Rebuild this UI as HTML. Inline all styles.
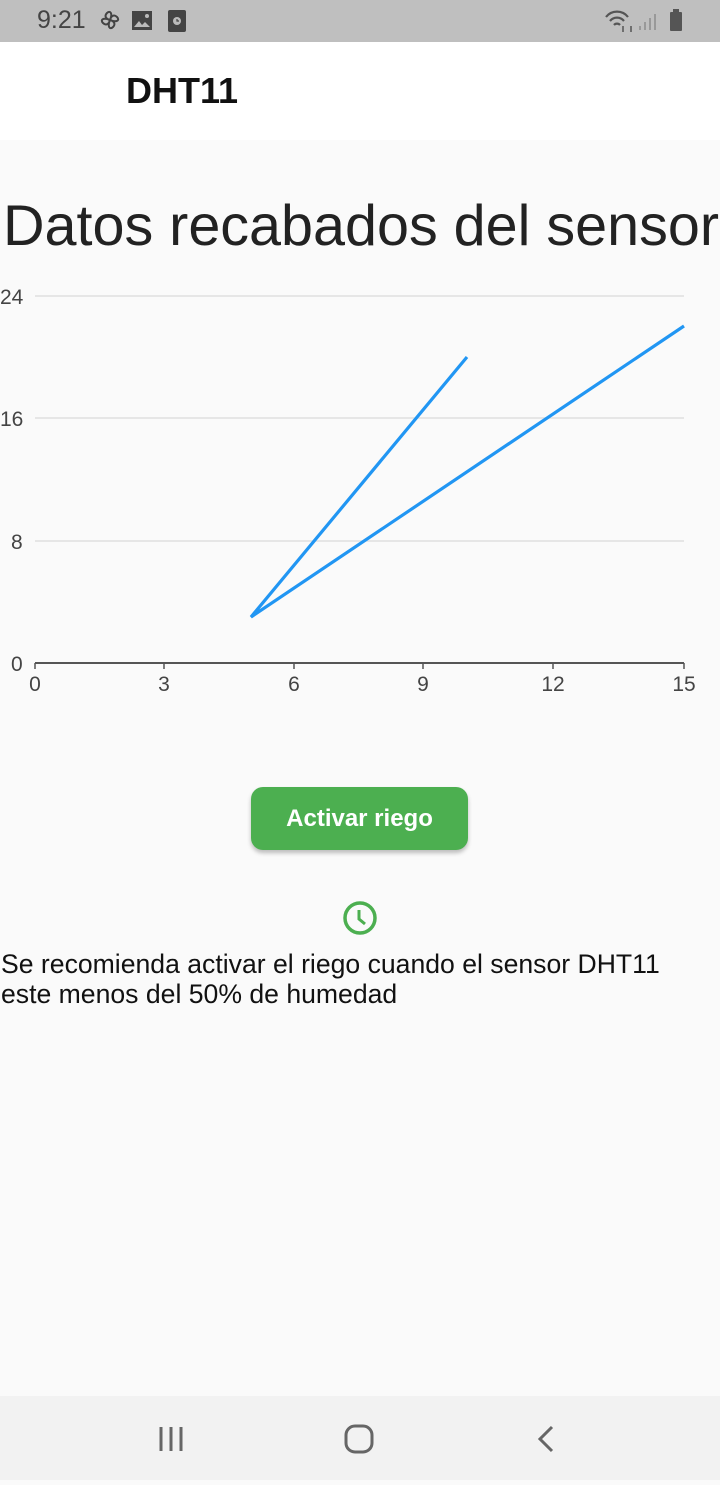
<!DOCTYPE html>
<html><head><meta charset="utf-8"><style>
body{margin:0;width:720px;height:1480px;background:#fafafa;font-family:"Liberation Sans",sans-serif;position:relative;overflow:hidden}
.sb{position:absolute;top:0;left:0;width:720px;height:42px;background:#bfbfbf}
.ab{position:absolute;top:42px;left:0;width:720px;height:98px;background:#fff}
.nav{position:absolute;top:1396px;left:0;width:720px;height:84px;background:#f2f2f2}
</style></head><body>
<div class="sb">
<span style="position:absolute;left:37px;top:6px;font-size:25px;color:#444">9:21</span>
<svg style="position:absolute;left:96px;top:8px" width="100" height="26" viewBox="0 0 100 26">
<g fill="none" stroke="#444" stroke-width="2"><path d="M14 12c-4-1-6-4-3-7s6 0 3 7zM14 12c1-4 4-6 7-3s0 6-7 3zM14 12c4 1 6 4 3 7s-6 0-3-7zM14 12c-1 4-4 6-7 3s0-6 7-3z"/></g>
<rect x="36" y="3" width="20" height="19" fill="#444"/><path d="M38 19l5-6 3 4 3-3 5 5z" fill="#bbb"/><circle cx="51" cy="8" r="2" fill="#bbb"/>
<rect x="72" y="2" width="18" height="22" rx="2" fill="#444"/><circle cx="81" cy="13" r="4" fill="#bbb"/><path d="M81 11v2h2" stroke="#444" stroke-width="1.2" fill="none"/>
</svg>
<svg style="position:absolute;left:604px;top:8px" width="86" height="26" viewBox="0 0 86 26">
<g fill="none" stroke="#555" stroke-width="2.2"><path d="M2 9a14 14 0 0 1 22 0M6 13a9 9 0 0 1 14 0M10 17a4 4 0 0 1 6 0"/></g>
<path d="M19 18v6M27 24v-6" stroke="#555" stroke-width="1.5"/>
<g stroke="#999" stroke-width="2"><path d="M36 22v-4M41 22v-8M46 22v-12M51 22v-16"/></g>
<rect x="66" y="4" width="12" height="19" rx="1" fill="#555"/><rect x="69" y="1" width="6" height="3" fill="#555"/>
</svg>
</div>
<div class="ab"><span style="position:absolute;left:126px;top:28px;font-size:36px;font-weight:bold;color:#111">DHT11</span></div>
<div style="position:absolute;left:3px;top:193px;font-size:57.5px;color:#222;white-space:nowrap">Datos recabados del sensor</div>
<svg style="position:absolute;left:0;top:280px" width="720" height="420" viewBox="0 280 720 420">
<g stroke="#e0e0e0" stroke-width="1.5"><path d="M35 296H684M35 418H684M35 541H684"/></g>
<path d="M35 663H684" stroke="#555" stroke-width="2"/>
<g stroke="#555" stroke-width="1.5"><path d="M35 663v6M164 663v6M294 663v6M423 663v6M553 663v6M684 663v6"/></g>
<polyline points="467,357 251,617 684,326" fill="none" stroke="#2196f3" stroke-width="3.2"/>
<g font-family="Liberation Sans" font-size="21" fill="#444">
<text x="0" y="304">24</text><text x="0" y="426">16</text><text x="11" y="549">8</text><text x="11" y="671">0</text>
<text x="35" y="691" text-anchor="middle">0</text><text x="164" y="691" text-anchor="middle">3</text><text x="294" y="691" text-anchor="middle">6</text><text x="423" y="691" text-anchor="middle">9</text><text x="553" y="691" text-anchor="middle">12</text><text x="684" y="691" text-anchor="middle">15</text>
</g></svg>
<div style="position:absolute;left:251px;top:787px;width:217px;height:63px;background:#4caf50;border-radius:12px;box-shadow:0 3px 4px rgba(0,0,0,.25);color:#fff;font-size:24px;font-weight:bold;line-height:63px;text-align:center">Activar riego</div>
<svg style="position:absolute;left:341px;top:899px" width="38" height="38" viewBox="0 0 38 38"><circle cx="19" cy="19" r="15" fill="none" stroke="#4caf50" stroke-width="3.5"/><path d="M18 11v9l6 5" fill="none" stroke="#4caf50" stroke-width="3"/></svg>
<div style="position:absolute;left:1px;top:949px;font-size:26.6px;line-height:30px;color:#111;white-space:nowrap">Se recomienda activar el riego cuando el sensor DHT11<br>este menos del 50% de humedad</div>
<div class="nav">
<svg width="720" height="84"><g stroke="#666" stroke-width="3" fill="none"><path d="M161 31v24M171 31v24M181 31v24"/><rect x="346" y="30" width="26" height="26" rx="9"/><path d="M552 31l-12 12 12 12"/></g></svg>
</div>
</body></html>
